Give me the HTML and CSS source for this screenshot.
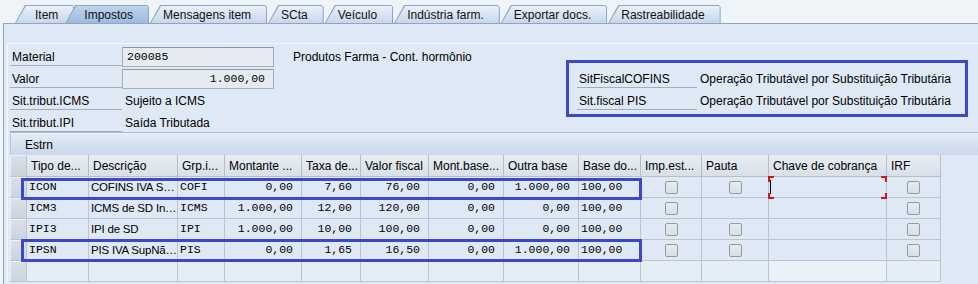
FILE: index.html
```html
<!DOCTYPE html>
<html lang="pt">
<head>
    <meta charset="UTF-8">
    <title>Item - Impostos</title>
    <link rel="stylesheet" href="styles.css">
</head>
<body>
    <div class="tabs">
        <div class="tab first">Item</div>
        <div class="tab active">Impostos</div>
        <div class="tab">Mensagens item</div>
        <div class="tab">SCta</div>
        <div class="tab">Veículo</div>
        <div class="tab">Indústria farm.</div>
        <div class="tab">Exportar docs.</div>
        <div class="tab">Rastreabilidade</div>
    </div>

    <div class="panel">
        <div class="inner">
            <div class="header">
                <div class="fields">
                    <div class="frow">
                        <span class="lbl">Material</span>
                        <span class="inp">200085</span>
                        <span class="desc">Produtos Farma - Cont. hormônio</span>
                    </div>
                    <div class="frow">
                        <span class="lbl">Valor</span>
                        <span class="inp num">1.000,00</span>
                    </div>
                    <div class="frow">
                        <span class="lbl">Sit.tribut.ICMS</span>
                        <span class="val">Sujeito a ICMS</span>
                    </div>
                    <div class="frow">
                        <span class="lbl">Sit.tribut.IPI</span>
                        <span class="val">Saída Tributada</span>
                    </div>
                </div>

                <div class="fiscal">
                    <div class="frow">
                        <span class="lbl lbl2">SitFiscalCOFINS</span>
                        <span class="val">Operação Tributável por Substituição Tributária</span>
                    </div>
                    <div class="frow">
                        <span class="lbl lbl2">Sit.fiscal PIS</span>
                        <span class="val">Operação Tributável por Substituição Tributária</span>
                    </div>
                </div>
            </div>

            <div class="tc">
                <div class="toolbar">Estrn</div>
                <div class="grid">
                    <div class="row hrow">
                        <div class="sel"></div>
                        <div>Tipo de...</div>
                        <div>Descrição</div>
                        <div>Grp.i...</div>
                        <div>Montante ...</div>
                        <div>Taxa de...</div>
                        <div>Valor fiscal</div>
                        <div>Mont.base...</div>
                        <div>Outra base</div>
                        <div>Base do...</div>
                        <div>Imp.est...</div>
                        <div>Pauta</div>
                        <div>Chave de cobrança</div>
                        <div>IRF</div>
                    </div>

                    <div class="row drow">
                        <div class="sel"></div>
                        <div class="mono">ICON</div>
                        <div class="txt">COFINS IVA S…</div>
                        <div class="mono">COFI</div>
                        <div class="mono r">0,00</div>
                        <div class="mono r">7,60</div>
                        <div class="mono r">76,00</div>
                        <div class="mono r">0,00</div>
                        <div class="mono r">1.000,00</div>
                        <div class="mono">100,00</div>
                        <div class="c"><span class="chk"></span></div>
                        <div class="c"><span class="chk"></span></div>
                        <div></div>
                        <div class="c"><span class="chk"></span></div>
                    </div>

                    <div class="row drow">
                        <div class="sel"></div>
                        <div class="mono">ICM3</div>
                        <div class="txt">ICMS de SD In…</div>
                        <div class="mono">ICMS</div>
                        <div class="mono r">1.000,00</div>
                        <div class="mono r">12,00</div>
                        <div class="mono r">120,00</div>
                        <div class="mono r">0,00</div>
                        <div class="mono r">0,00</div>
                        <div class="mono">100,00</div>
                        <div class="c"><span class="chk"></span></div>
                        <div></div>
                        <div></div>
                        <div class="c"><span class="chk"></span></div>
                    </div>

                    <div class="row drow">
                        <div class="sel"></div>
                        <div class="mono">IPI3</div>
                        <div class="txt">IPI de SD</div>
                        <div class="mono">IPI</div>
                        <div class="mono r">1.000,00</div>
                        <div class="mono r">10,00</div>
                        <div class="mono r">100,00</div>
                        <div class="mono r">0,00</div>
                        <div class="mono r">0,00</div>
                        <div class="mono">100,00</div>
                        <div class="c"><span class="chk"></span></div>
                        <div class="c"><span class="chk"></span></div>
                        <div></div>
                        <div class="c"><span class="chk"></span></div>
                    </div>

                    <div class="row drow">
                        <div class="sel"></div>
                        <div class="mono">IPSN</div>
                        <div class="txt">PIS IVA SupNã…</div>
                        <div class="mono">PIS</div>
                        <div class="mono r">0,00</div>
                        <div class="mono r">1,65</div>
                        <div class="mono r">16,50</div>
                        <div class="mono r">0,00</div>
                        <div class="mono r">1.000,00</div>
                        <div class="mono">100,00</div>
                        <div class="c"><span class="chk"></span></div>
                        <div class="c"><span class="chk"></span></div>
                        <div></div>
                        <div class="c"><span class="chk"></span></div>
                    </div>

                    <div class="row drow empty">
                        <div class="sel"></div>
                        <div></div><div></div><div></div><div></div><div></div><div></div>
                        <div></div><div></div><div></div><div></div><div></div>
                        <div class="edit"></div>
                        <div></div>
                    </div>

                    <!-- marcacoes azuis sobre as linhas COFINS e PIS -->
                    <div class="mark m1"></div>
                    <div class="mark m2"></div>

                    <!-- campo focado: cantos vermelhos + cursor -->
                    <svg class="focus" width="120" height="24" viewBox="0 0 120 24">
                        <path d="M1 6V1H6M113 1H118V6M1 17V22H6M113 22H118V17" fill="none" stroke="#d4161c" stroke-width="2"/>
                        <rect x="2" y="4" width="1" height="14" fill="#000"/>
                    </svg>
                </div>
            </div>
        </div>
    </div>
</body>
</html>
```

FILE: styles.css
```css
body {
    margin: 0;
    height: 284px;
    overflow: hidden;
    font-family: "Liberation Sans", Arial, sans-serif;
    font-size: 12px;
    color: #000;
    background: #eff4f9;
}

/* abas */
.tabs {
    display: flex;
    align-items: flex-end;
    height: 23px;
    padding-left: 15px;
    box-sizing: border-box;
}

.tab {
    position: relative;
    isolation: isolate;
    height: 18px;
    line-height: 20px;
    padding: 0 16px 0 13px;
    margin-left: 1px;
    white-space: nowrap;
    color: #111;
}

.tab::before {
    content: "";
    position: absolute;
    inset: 0;
    z-index: -1;
    background: #8ea6c4;
    clip-path: polygon(10px 0, calc(100% - 2px) 0, 100% 2px, 100% 100%, 0 100%);
}

.tab::after {
    content: "";
    position: absolute;
    inset: 1px 1px 0 1px;
    z-index: -1;
    background: linear-gradient(#eaf1f9, #c7d7eb);
    clip-path: polygon(10px 0, calc(100% - 1px) 0, 100% 1px, 100% 100%, 0 100%);
}

.tab.first {
    margin-left: 0;
    padding-left: 20px;
}

.tab.active {
    margin-left: -9px;
    padding-left: 19px;
    z-index: 1;
}

.tab.active::after {
    background: linear-gradient(#bfd3ec, #9dbbe0);
}

/* painel */
.panel {
    margin-left: 3px;
    height: 260px;
    overflow: hidden;
    border-top: 1px solid #8ea6c4;
    border-left: 1px solid #8ea6c4;
    background: #dfe9f5;
}

.inner {
    margin: 19px 0 0 3px;
    border-top: 1px solid #f6f9fc;
    border-left: 1px solid #f6f9fc;
}

.header {
    display: flex;
    height: 88px;
}

.fields {
    padding-left: 2px;
}

.frow {
    display: flex;
    align-items: flex-start;
    height: 22px;
    white-space: nowrap;
}

.lbl {
    width: 112px;
    height: 22px;
    line-height: 26px;
    padding-left: 2px;
    box-sizing: border-box;
    border-bottom: 1px solid #a4aeb9;
}

.inp {
    width: 152px;
    height: 20px;
    margin-top: 3px;
    padding: 0 4px;
    box-sizing: border-box;
    border: 1px solid #a6afb9;
    border-top-color: #8d97a2;
    background: #e6ebf1;
    font-family: "Liberation Mono", "Courier New", monospace;
    font-size: 11.5px;
    line-height: 18px;
}

.inp.num {
    text-align: right;
    padding-right: 8px;
}

.desc {
    margin-left: 19px;
    line-height: 26px;
}

.val {
    padding-left: 3px;
    line-height: 26px;
}

.fiscal {
    align-self: flex-start;
    width: 380px;
    margin: 16px 10px 0 auto;
    padding: 3px 8px 4px 8px;
    border: 3px solid #3f47c9;
}

.lbl2 {
    width: 120px;
}

/* controle de tabela */
.tc {
    margin-left: 2px;
    border-top: 1px solid #a9bbd0;
}

.toolbar {
    height: 22px;
    line-height: 22px;
    padding-left: 14px;
    box-sizing: border-box;
    border-left: 1px solid #b3c4d6;
    border-top: 1px solid #eef3f9;
    background: linear-gradient(#e3ebf5, #c9d8ea);
}

.grid {
    position: relative;
}

.row {
    display: grid;
    grid-template-columns: 17px 62px 89px 47px 77px 59px 68px 75px 75px 62px 61px 67px 118px 54px;
    width: 931px;
}

.row > div {
    box-sizing: border-box;
    border-right: 1px solid #b9c5d2;
    border-bottom: 1px solid #b9c5d2;
    overflow: hidden;
    white-space: nowrap;
}

.hrow {
    height: 22px;
}

.hrow > div {
    padding-left: 4px;
    line-height: 22px;
    background: linear-gradient(#e8edf2, #d8e0e8);
    border-color: #b3bfcb;
}

.drow {
    height: 21px;
}

.drow > div {
    line-height: 20px;
    background: #dfe9f5;
}

.row > .sel,
.hrow > .sel {
    padding: 0;
    background: linear-gradient(#dae1e8, #cbd3dc);
    border-color: #bcc6d0;
    box-shadow: inset 1px 1px #eef2f6;
}

.mono {
    font-family: "Liberation Mono", "Courier New", monospace;
    font-size: 11.5px;
    padding-left: 2px;
}

.mono.r {
    text-align: right;
    padding-right: 8px;
}

.txt {
    padding-left: 2px;
    font-size: 11.5px;
    letter-spacing: -0.2px;
}

.drow > .c {
    display: flex;
    align-items: center;
    justify-content: center;
}

.chk {
    width: 13px;
    height: 13px;
    box-sizing: border-box;
    border: 1px solid #959a9f;
    border-radius: 2px;
    background: linear-gradient(#e6ebf0, #d8dfe6);
}

.empty > div {
    background: #e5edf7;
}

.drow > .edit {
    background: #ebf1f9;
}

.mark {
    position: absolute;
    left: 11px;
    width: 621px;
    box-sizing: border-box;
    border: 3px solid #3f47c9;
}

.m1 {
    top: 23px;
    height: 22px;
}

.m2 {
    top: 84px;
    height: 23px;
}

.focus {
    position: absolute;
    left: 758px;
    top: 21px;
}
```
